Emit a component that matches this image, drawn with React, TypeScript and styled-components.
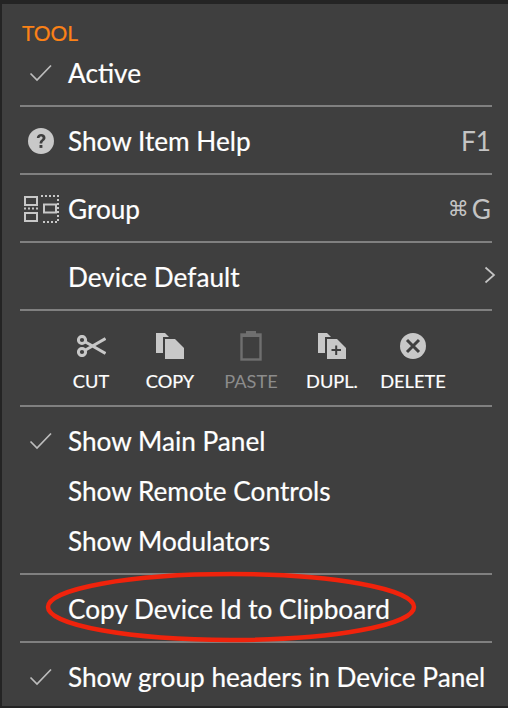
import React from "react";
import styled, { createGlobalStyle } from "styled-components";

const Global = createGlobalStyle`
  html, body { margin: 0; padding: 0; background: #242424; }
  body { font-family: "Lato", "Open Sans", sans-serif; }
`;

const Screen = styled.div`
  width: 508px;
  height: 708px;
  padding: 4px 0 2px 2px;
  box-sizing: border-box;
  background: #242424;
  overflow: hidden;
`;

const Panel = styled.div`
  position: relative;
  height: 702px;
  background: #3f3f3f;
  padding: 14px 16px 0 18px;
  box-sizing: border-box;
  color: #fff;
`;

const Heading = styled.div`
  height: 30px;
  line-height: 30px;
  padding-left: 2px;
  color: #fb8216;
  font-size: 21px;
  -webkit-text-stroke: 0.2px #fb8216;
`;

const Row = styled.div<{ $raised?: boolean }>`
  height: 50px;
  padding-top: ${(p) => (p.$raised ? 0 : 1)}px;
  padding-bottom: ${(p) => (p.$raised ? 1 : 0)}px;
  box-sizing: border-box;
  display: flex;
  align-items: center;
  font-size: 26.2px;
  white-space: nowrap;
  -webkit-text-stroke: 0.2px #fff;
`;

const IconSlot = styled.div`
  width: 48px;
  height: 48px;
  flex: none;
  padding-right: 6px;
  box-sizing: border-box;
  display: flex;
  align-items: center;
  justify-content: center;
  color: #c8c8c8;
  -webkit-text-stroke: 0;
`;

const Label = styled.span`
  flex: 1;
`;

const Shortcut = styled.span`
  color: #c4c4c4;
  -webkit-text-stroke: 0;
  padding-right: 1px;
  display: flex;
  align-items: center;
  gap: 3px;
`;

const CmdGlyph = styled.span`
  font-size: 21px;
  font-family: "DejaVu Sans", sans-serif;
`;

const ChevronBox = styled.div`
  display: flex;
  margin: -3px -4px 0 0;
`;

const Divider = styled.div<{ $top?: number }>`
  height: 2px;
  background: #808080;
  margin: ${(p) => p.$top ?? 8}px 0 8px;
`;

const Tools = styled.div`
  height: 78px;
  display: flex;
  padding-left: 40px;
`;

const Tool = styled.div<{ $w: number; $off?: boolean }>`
  width: ${(p) => p.$w}px;
  display: flex;
  flex-direction: column;
  align-items: center;
  color: ${(p) => (p.$off ? "#8c8c8c" : "#fff")};
  font-size: 18.2px;
  line-height: 22px;
  -webkit-text-stroke: ${(p) => (p.$off ? "0" : "0.2px #fff")};
`;

const ToolIcon = styled.div<{ $off?: boolean }>`
  height: 30px;
  margin: 12px 0 9px;
  display: flex;
  align-items: center;
  color: ${(p) => (p.$off ? "#6f6f6f" : "#c8c8c8")};
`;

const Ring = styled.svg`
  position: absolute;
  left: 0;
  top: 0;
  pointer-events: none;
`;

const Check = () => (
  <svg width="26" height="20" viewBox="0 0 26 20" fill="none" stroke="#bdbdbd" strokeWidth="1.7">
    <path d="M2.5 10.5 L9 17 L23 2.5" />
  </svg>
);

const Help = () => (
  <svg width="28" height="28" viewBox="0 0 28 28">
    <circle cx="14" cy="14" r="13" fill="#c8c8c8" />
    <path d="M9.8 11 C10 8.3 11.8 7 14.2 7 C16.7 7 18.5 8.5 18.5 10.7 C18.5 13.6 15.2 13.8 15.2 16.5 L12.6 16.5 C12.6 12.7 15.6 12.7 15.6 10.8 C15.6 10 15 9.4 14.1 9.4 C13.2 9.4 12.6 10 12.4 11 Z" fill="#3f3f3f" />
    <rect x="12.5" y="18" width="2.9" height="2.9" fill="#3f3f3f" />
  </svg>
);

const GroupIcon = () => (
  <svg width="36" height="28" viewBox="0 0 36 28" fill="none" stroke="#c8c8c8" strokeWidth="2">
    <rect x="2" y="2" width="12" height="8" />
    <rect x="2" y="18" width="12" height="8" />
    <rect x="21" y="9.5" width="12" height="8" />
    <path d="M18 1 H35 V27 H18" strokeDasharray="2 2" />
    <path d="M1 13.5 H15" strokeDasharray="2 2" />
  </svg>
);

const Chevron = () => (
  <svg width="12" height="18" viewBox="0 0 12 18" fill="none" stroke="#c4c4c4" strokeWidth="1.7">
    <path d="M1.5 1.5 L10 9 L1.5 16.5" />
  </svg>
);

const Scissors = () => (
  <svg width="29" height="22" viewBox="0 0 29 22" fill="none" stroke="currentColor" strokeWidth="3">
    <circle cx="5" cy="5" r="3.6" />
    <circle cx="5" cy="17" r="3.6" />
    <path d="M8.5 7 L28.5 18.5 M8.5 15 L28.5 3.5" />
  </svg>
);

const CopyIcon = ({ plus }: { plus?: boolean }) => (
  <svg width="28" height="26" viewBox="0 0 28 26">
    <path d="M0 0 H9 L13 4 H7 V20 H0 Z" fill="currentColor" />
    <path d="M9 6 H19 L28 15 V26 H9 Z" fill="currentColor" />
    {plus && <path d="M13.5 17 H23 M18.2 12.5 V22" stroke="#3f3f3f" strokeWidth="2" />}
  </svg>
);

const PasteIcon = () => (
  <svg width="22" height="30" viewBox="0 0 22 30" fill="none">
    <rect x="1.5" y="3.5" width="19" height="25" stroke="currentColor" strokeWidth="2.4" />
    <rect x="6" y="0" width="10" height="4" fill="currentColor" />
    <rect x="1" y="3" width="20" height="3" fill="currentColor" />
  </svg>
);

const DeleteIcon = () => (
  <svg width="26" height="26" viewBox="0 0 26 26">
    <circle cx="13" cy="13" r="13" fill="currentColor" />
    <path d="M7 7 L19 19 M19 7 L7 19" stroke="#3f3f3f" strokeWidth="3" />
  </svg>
);

export default function App() {
  return (
    <Screen>
      <Global />
      <Panel>
        <Heading>TOOL</Heading>
        <Row $raised>
          <IconSlot><Check /></IconSlot>
          <Label>Active</Label>
        </Row>
        <Divider $top={7} />
        <Row>
          <IconSlot><Help /></IconSlot>
          <Label>Show Item Help</Label>
          <Shortcut>F1</Shortcut>
        </Row>
        <Divider />
        <Row>
          <IconSlot><GroupIcon /></IconSlot>
          <Label>Group</Label>
          <Shortcut><CmdGlyph>⌘</CmdGlyph>G</Shortcut>
        </Row>
        <Divider />
        <Row>
          <IconSlot />
          <Label>Device Default</Label>
          <ChevronBox><Chevron /></ChevronBox>
        </Row>
        <Divider />
        <Tools>
          <Tool $w={62}><ToolIcon><Scissors /></ToolIcon>CUT</Tool>
          <Tool $w={96}><ToolIcon><CopyIcon /></ToolIcon>COPY</Tool>
          <Tool $w={66} $off><ToolIcon $off><PasteIcon /></ToolIcon>PASTE</Tool>
          <Tool $w={96}><ToolIcon><CopyIcon plus /></ToolIcon>DUPL.</Tool>
          <Tool $w={66}><ToolIcon><DeleteIcon /></ToolIcon>DELETE</Tool>
        </Tools>
        <Divider />
        <Row>
          <IconSlot><Check /></IconSlot>
          <Label>Show Main Panel</Label>
        </Row>
        <Row>
          <IconSlot />
          <Label>Show Remote Controls</Label>
        </Row>
        <Row>
          <IconSlot />
          <Label>Show Modulators</Label>
        </Row>
        <Divider />
        <Row>
          <IconSlot />
          <Label>Copy Device Id to Clipboard</Label>
        </Row>
        <Divider />
        <Row>
          <IconSlot><Check /></IconSlot>
          <Label>Show group headers in Device Panel</Label>
        </Row>
        <Ring width="506" height="702" viewBox="0 0 506 702" fill="none">
          <ellipse cx="229" cy="603" rx="183" ry="33" stroke="#f0230c" strokeWidth="4.5" />
        </Ring>
      </Panel>
    </Screen>
  );
}
